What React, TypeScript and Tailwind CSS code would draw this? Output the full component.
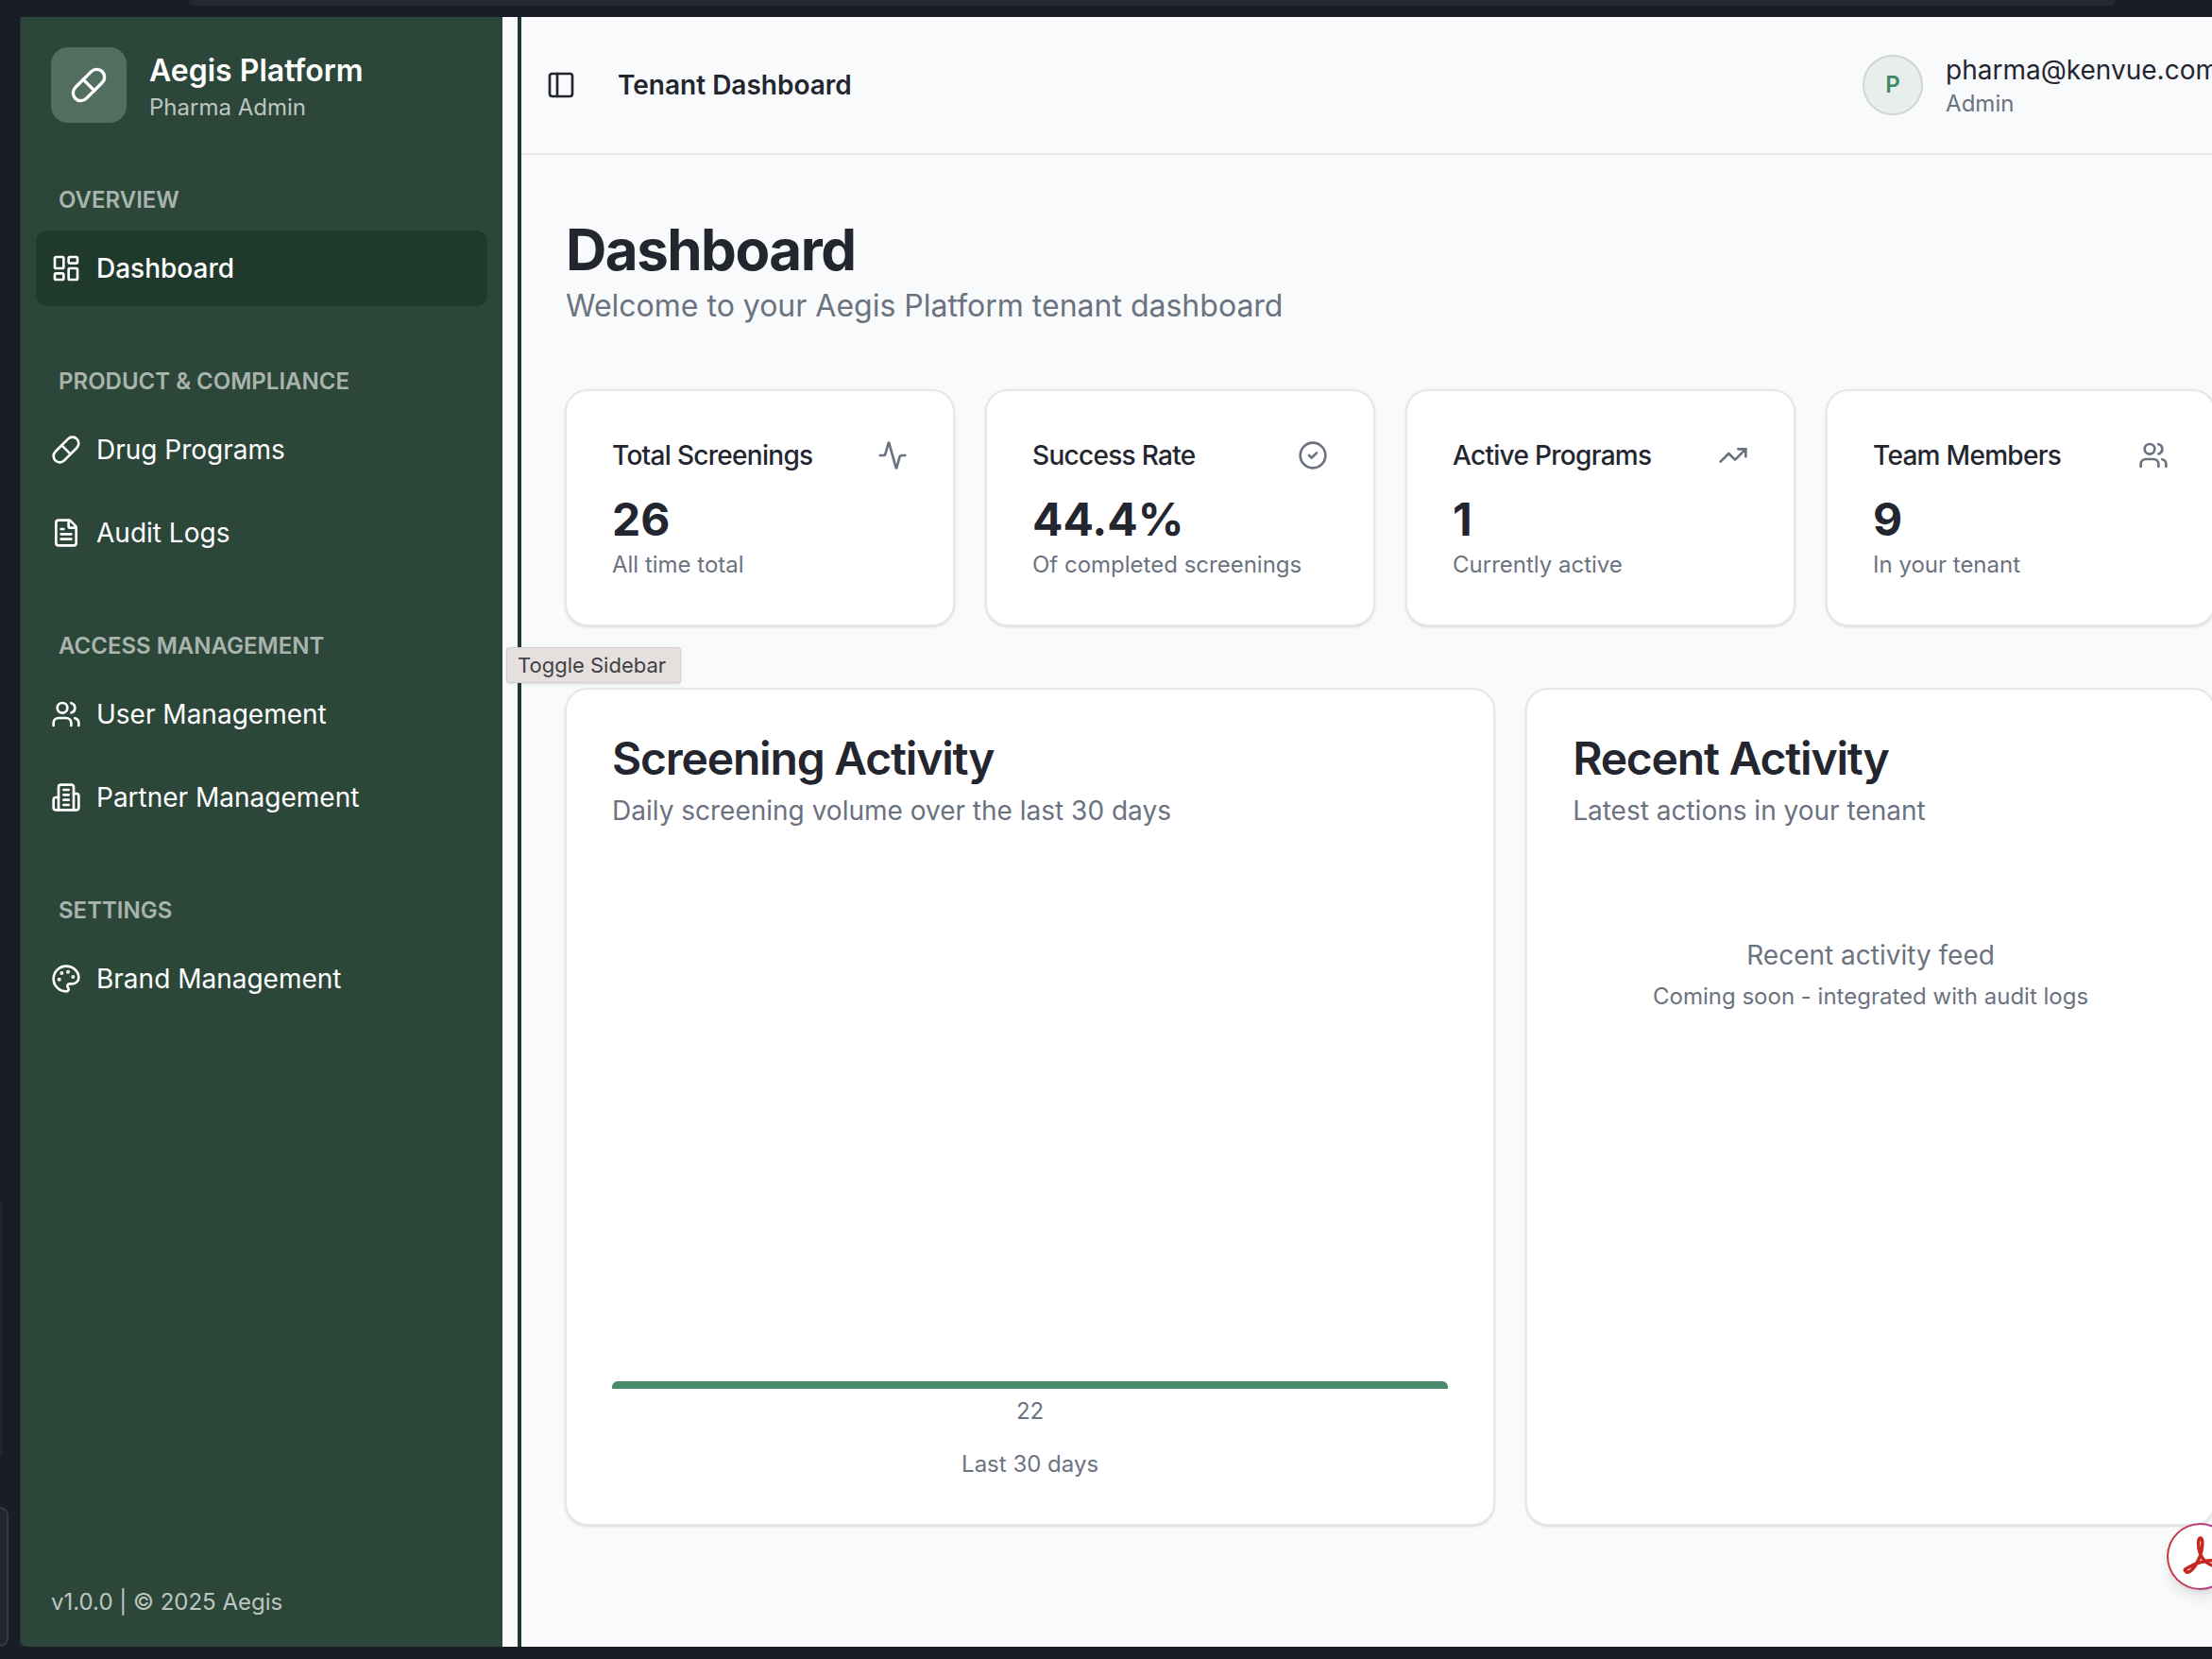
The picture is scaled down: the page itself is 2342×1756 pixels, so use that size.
import { Activity, CircleCheck, FileText, LayoutDashboard, Palette, PanelLeft, Pill, TrendingUp, Users } from "lucide-react";

// Older lucide Building2 shape, the current package draws it differently
const PartnerIcon = ({ size = 24, className }: { size?: number; className?: string }) => (
  <svg
    width={size}
    height={size}
    viewBox="0 0 24 24"
    fill="none"
    stroke="currentColor"
    strokeWidth="2"
    strokeLinecap="round"
    strokeLinejoin="round"
    className={className}
  >
    <path d="M6 22V4a2 2 0 0 1 2-2h8a2 2 0 0 1 2 2v18Z" />
    <path d="M6 12H4a2 2 0 0 0-2 2v6a2 2 0 0 0 2 2h2" />
    <path d="M18 9h2a2 2 0 0 1 2 2v9a2 2 0 0 1-2 2h-2" />
    <path d="M10 6h4" />
    <path d="M10 10h4" />
    <path d="M10 14h4" />
    <path d="M10 18h4" />
  </svg>
);

const navGroups = [
  { label: "OVERVIEW", items: [{ label: "Dashboard", icon: LayoutDashboard, active: true }] },
  {
    label: "PRODUCT & COMPLIANCE",
    items: [
      { label: "Drug Programs", icon: Pill },
      { label: "Audit Logs", icon: FileText },
    ],
  },
  {
    label: "ACCESS MANAGEMENT",
    items: [
      { label: "User Management", icon: Users },
      { label: "Partner Management", icon: PartnerIcon },
    ],
  },
  { label: "SETTINGS", items: [{ label: "Brand Management", icon: Palette }] },
];

const stats = [
  { title: "Total Screenings", value: "26", note: "All time total", icon: Activity },
  { title: "Success Rate", value: "44.4%", note: "Of completed screenings", icon: CircleCheck },
  { title: "Active Programs", value: "1", note: "Currently active", icon: TrendingUp },
  { title: "Team Members", value: "9", note: "In your tenant", icon: Users },
];

const Sidebar = () => (
  <aside className="w-[510px] flex-none flex flex-col bg-[#2c473a] rounded-bl-[6px]">
    {/* Brand */}
    <div className="h-[146px] flex-none flex items-start pt-[32px] pl-[32px] gap-[24px] border-b-2 border-[#284234]">
      <div className="w-[80px] h-[80px] rounded-[18px] bg-[#516e60] flex items-center justify-center">
        <Pill size={40} className="text-white" />
      </div>
      <div className="flex flex-col pt-[2px]">
        <span className="text-[32px] leading-[46px] font-semibold text-white">Aegis Platform</span>
        <span className="text-[24px] leading-[32px] text-white/70">Pharma Admin</span>
      </div>
    </div>

    {/* Navigation */}
    <nav className="flex-1 pt-[23px] px-[16px] flex flex-col gap-[55px]">
      {navGroups.map((group) => (
        <div key={group.label} className="flex flex-col">
          <div className="h-[48px] mb-[9px] pl-[24px] pt-[1px] flex items-center text-[24px] font-semibold text-white/60">
            {group.label}
          </div>
          <div className="flex flex-col gap-[8px]">
            {group.items.map((item) => (
              <a
                key={item.label}
                className={`h-[80px] rounded-[12px] pl-[16px] flex items-center gap-[16px] text-[28px] text-white ${
                  "active" in item ? "bg-[#1f392c] font-medium" : ""
                }`}
              >
                <item.icon size={32} className="flex-none" />
                {item.label}
              </a>
            ))}
          </div>
        </div>
      ))}
    </nav>

    {/* Footer */}
    <div className="h-[96px] flex-none pt-[31px] pl-[32px] border-t-2 border-[#284234] text-[24px] leading-[32px] text-white/70">
      v1.0.0 | © 2025 Aegis
    </div>
  </aside>
);

const StatCard = ({ stat }: { stat: (typeof stats)[number] }) => (
  <div className="h-[251px] bg-white rounded-[24px] border-2 border-[#e5e7eb] shadow-sm px-[48px] pt-[48px]">
    <div className="h-[40px] flex items-center justify-between">
      <span className="text-[28px] font-medium tracking-tight text-[#23262f]">{stat.title}</span>
      <stat.icon size={32} className="text-[#6b7280]" />
    </div>
    <div className="mt-[16px] h-[64px] flex items-center text-[48px] font-bold text-[#23262f]">{stat.value}</div>
    <div className="h-[32px] flex items-center text-[24px] text-[#6b7280]">{stat.note}</div>
  </div>
);

const AcrobatBadge = () => (
  <div className="absolute left-[2294px] top-[1612px] w-[71px] h-[71px] rounded-full p-[2px] bg-gradient-to-r from-[#c9363a] to-[#a63da8] shadow-lg">
    <div className="w-full h-full rounded-full bg-white flex items-center justify-center">
      <svg width="48" height="48" viewBox="0 0 48 48" fill="none" stroke="#c5281c" strokeWidth="3.5" strokeLinejoin="round">
        <path d="M8 39C11 43 18 36 23 24C26 16 27 5 24 4C21 3 21 12 23 19C26 28 33 33 40 34C47 35 47 29 40 28C31 27 20 30 13 34C8 37 6 37 8 39Z" />
      </svg>
    </div>
  </div>
);

export default function App() {
  return (
    <div className="relative w-[2342px] h-[1756px] overflow-hidden flex flex-col bg-[#1a1d26] font-['Inter',sans-serif]">
      {/* Browser chrome remnants */}
      <div className="h-[18px] flex-none pl-[199px]">
        <div className="w-[2041px] h-[6px] rounded-b-[8px] bg-[#252830]" />
      </div>

      <div className="flex-1 min-h-0 flex">
        <div className="w-[22px] flex-none flex flex-col justify-end border-r border-[#2a2b38]">
          <div className="w-[2px] h-[270px] bg-[#23262e]" />
          <div className="mt-[54px] w-[9px] h-[148px] rounded-r-[10px] bg-[#23262e] border-y-2 border-r-2 border-[#383b44]" />
        </div>
        <Sidebar />
        <div className="w-[16px] flex-none bg-[#f9fafb]" />
        <div className="w-[4px] flex-none bg-[#1f392c]" />

        <main className="w-[1849px] flex-none bg-[#f9fafb]">
          <header className="h-[146px] flex items-center justify-between pl-[26px] pr-[52px] border-b-2 border-[#e5e7eb]">
            <div className="flex items-center gap-[44px]">
              <PanelLeft size={32} className="text-[#23262f]" />
              <span className="text-[28px] font-semibold text-[#23262f]">Tenant Dashboard</span>
            </div>
            <div className="flex items-center gap-[24px]">
              <div className="w-[64px] h-[64px] rounded-full bg-[#e8eeeb] border-2 border-[#d1d5d3] flex items-center justify-center text-[24px] font-semibold text-[#3f8a63]">
                P
              </div>
              <div className="flex flex-col">
                <span className="text-[28px] leading-[40px] text-[#23262f]">pharma@kenvue.com</span>
                <span className="text-[24px] leading-[32px] text-[#6b7280]">Admin</span>
              </div>
            </div>
          </header>

          <div className="pl-[47px] pt-[64px]">
            <h1 className="text-[60px] leading-[72px] font-bold tracking-tight text-[#23262f]">Dashboard</h1>
            <p className="mt-[2px] text-[32px] leading-[44px] text-[#6b7280]">Welcome to your Aegis Platform tenant dashboard</p>

            <div className="-ml-[1px] w-[1748px] mt-[66px] grid grid-cols-4 gap-[32px]">
              {stats.map((stat) => (
                <StatCard key={stat.title} stat={stat} />
              ))}
            </div>

            <div className="-ml-[1px] w-[1748px] mt-[65px] grid grid-cols-7 gap-[32px]">
              <section className="col-span-4 h-[887px] bg-white rounded-[24px] border-2 border-[#e5e7eb] shadow-sm px-[48px] pt-[47px] pb-[47px] flex flex-col">
                <h2 className="text-[48px] leading-[52px] font-semibold tracking-tight text-[#23262f]">Screening Activity</h2>
                <p className="mt-[9px] text-[28px] leading-[40px] text-[#6b7280]">Daily screening volume over the last 30 days</p>
                <div className="flex-1 flex flex-col justify-end items-center">
                  <div className="w-full h-[8px] rounded-t-[6px] bg-[#4a8b6b]" />
                  <span className="mt-[8px] text-[24px] leading-[32px] text-[#6b7280]">22</span>
                  <span className="mt-[24px] text-[24px] leading-[32px] text-[#6b7280]">Last 30 days</span>
                </div>
              </section>

              <section className="col-span-3 h-[887px] bg-white rounded-[24px] border-2 border-[#e5e7eb] shadow-sm px-[48px] pt-[47px]">
                <h2 className="text-[48px] leading-[52px] font-semibold tracking-tight text-[#23262f]">Recent Activity</h2>
                <p className="mt-[9px] text-[28px] leading-[40px] text-[#6b7280]">Latest actions in your tenant</p>
                <div className="mt-[113px] flex flex-col items-center">
                  <span className="text-[28px] leading-[40px] text-[#6b7280]">Recent activity feed</span>
                  <span className="mt-[8px] text-[24px] leading-[32px] text-[#6b7280]">Coming soon - integrated with audit logs</span>
                </div>
              </section>
            </div>
          </div>
        </main>
      </div>

      <div className="h-[13px] flex-none" />

      {/* Tooltip over the rail */}
      <div className="absolute left-[536px] top-[685px] h-[38px] w-[185px] rounded-[3px] bg-[#e5e0dd] border border-[#d4d0cd] shadow-sm flex items-center pl-[11px] text-[22px] text-[#3f3f46]">
        Toggle Sidebar
      </div>

      <AcrobatBadge />
    </div>
  );
}
